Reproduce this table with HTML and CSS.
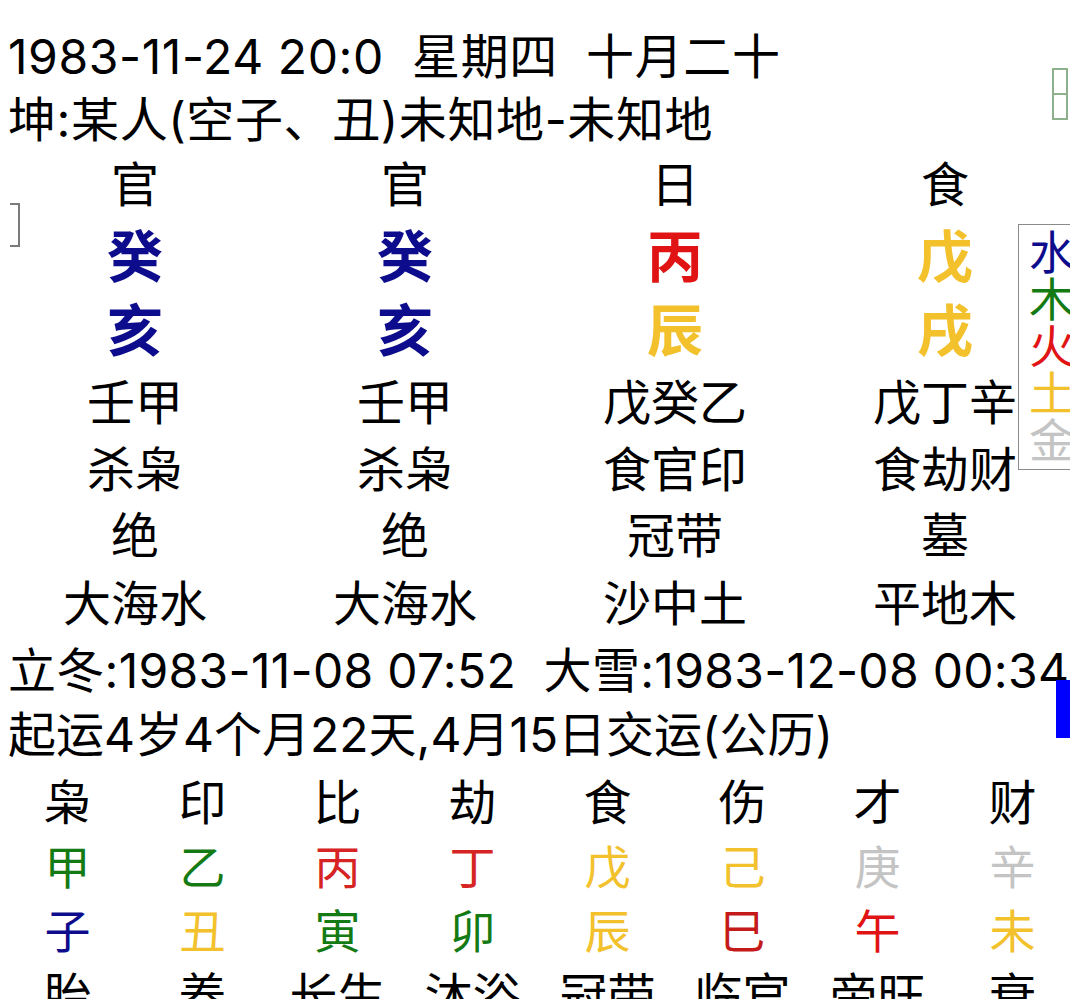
FILE: index.html
```html
<!DOCTYPE html>
<html lang="zh-CN">
<head>
<meta charset="utf-8">
<title>八字排盘</title>
<link rel="stylesheet" href="styles.css">
</head>
<body>
<div class="page">
  <div class="info line1">1983-11-24 20:0  星期四  十月二十</div>
  <div class="info line2">坤:某人(空子、丑)未知地-未知地</div>

  <div class="pillars">
    <div class="prow r-god"><span>官</span><span>官</span><span>日</span><span>食</span></div>
    <div class="prow r-stem"><span class="water">癸</span><span class="water">癸</span><span class="fire">丙</span><span class="earth">戊</span></div>
    <div class="prow r-branch"><span class="water">亥</span><span class="water">亥</span><span class="earth">辰</span><span class="earth">戌</span></div>
    <div class="prow r-hidden"><span>壬甲</span><span>壬甲</span><span>戊癸乙</span><span>戊丁辛</span></div>
    <div class="prow r-hgod"><span>杀枭</span><span>杀枭</span><span>食官印</span><span>食劫财</span></div>
    <div class="prow r-stage"><span>绝</span><span>绝</span><span>冠带</span><span>墓</span></div>
    <div class="prow r-nayin"><span>大海水</span><span>大海水</span><span>沙中土</span><span>平地木</span></div>
  </div>

  <div class="info line3">立冬:1983-11-08 07:52  大雪:1983-12-08 00:34</div>
  <div class="info line4">起运4岁4个月22天,4月15日交运(公历)</div>

  <div class="table8">
    <div class="trow t-god"><span>枭</span><span>印</span><span>比</span><span>劫</span><span>食</span><span>伤</span><span>才</span><span>财</span></div>
    <div class="trow t-stem"><span class="wood">甲</span><span class="wood">乙</span><span class="fire2">丙</span><span class="fire2">丁</span><span class="earth">戊</span><span class="earth">己</span><span class="metal">庚</span><span class="metal">辛</span></div>
    <div class="trow t-branch"><span class="water">子</span><span class="earth">丑</span><span class="wood">寅</span><span class="wood">卯</span><span class="earth">辰</span><span class="fire3">巳</span><span class="fire">午</span><span class="earth">未</span></div>
    <div class="trow t-stage"><span>胎</span><span>养</span><span>长生</span><span>沐浴</span><span>冠带</span><span>临官</span><span>帝旺</span><span>衰</span></div>
  </div>

  <div class="side-panel">
    <span class="water">水</span>
    <span class="wood">木</span>
    <span class="fire">火</span>
    <span class="earth">土</span>
    <span class="metal">金</span>
  </div>
  <div class="tofu"></div>
  <div class="bracket"></div>
  <div class="blue-bar"></div>
</div>
</body>
</html>
```

FILE: styles.css
```css
html, body {
  margin: 0;
  padding: 0;
  background: #ffffff;
}
body {
  font-family: "Noto Sans CJK SC", "Noto Sans", sans-serif;
  color: #000000;
  overflow: hidden;
  height: 999px;
}
.page {
  position: relative;
  width: 1080px;
  height: 999px;
  overflow: hidden;
  padding-top: 25px;
  box-sizing: border-box;
}
.info {
  font-family: "Inter", "Noto Sans CJK SC", sans-serif;
  font-size: 48px;
  white-space: pre;
  padding-left: 8px;
}
.line1 { line-height: 64px; letter-spacing: 0.6px; }
.line2 { line-height: 52px; padding-top: 5px; letter-spacing: 0.6px; }
.line3 { line-height: 58px; padding-top: 8px; letter-spacing: 0.3px; }
.line4 { line-height: 62px; padding-top: 4px; }

.prow {
  display: grid;
  grid-template-columns: repeat(4, 270px);
  font-size: 48px;
  text-align: center;
  white-space: nowrap;
}
.r-god { line-height: 70px; }
.r-stem, .r-branch { line-height: 74px; font-size: 56px; font-weight: 700; }
.r-hidden { line-height: 70px; }
.r-hgod { line-height: 64px; }
.r-stage { line-height: 68px; }
.r-nayin { line-height: 68px; }

.trow {
  display: grid;
  grid-template-columns: repeat(8, 135px);
  font-size: 46px;
  text-align: center;
  white-space: nowrap;
}
.t-god { line-height: 66px; font-size: 48px; }
.t-stem { line-height: 64px; }
.t-branch { line-height: 64px; }
.t-stage { line-height: 64px; font-size: 48px; }

.water { color: #0c0c8c; }
.wood { color: #147a14; }
.fire { color: #e01414; }
.fire2 { color: #d62424; }
.fire3 { color: #c41a1a; }
.earth { color: #f2c12c; }
.metal { color: #c4c4c4; }

.side-panel {
  position: absolute;
  left: 1018px;
  top: 224px;
  width: 52px;
  height: 246px;
  box-sizing: border-box;
  border: 1px solid #8a8a8a;
  border-right: none;
  background: #ffffff;
  overflow: hidden;
  display: flex;
  flex-direction: column;
  padding: 1px 0 0 10px;
  font-size: 46px;
  line-height: 47px;
  white-space: nowrap;
}
.tofu {
  position: absolute;
  left: 1052px;
  top: 68px;
  width: 16px;
  height: 52px;
  box-sizing: border-box;
  border: 2px solid #8db08d;
}
.tofu::after {
  content: "";
  position: absolute;
  left: 0;
  right: 0;
  top: 23px;
  height: 2px;
  background: #8db08d;
}
.bracket {
  position: absolute;
  left: 10px;
  top: 203px;
  width: 10px;
  height: 44px;
  box-sizing: border-box;
  border: 2px solid #7a7a7a;
  border-left: none;
}
.blue-bar {
  position: absolute;
  left: 1056px;
  top: 680px;
  width: 14px;
  height: 58px;
  background: #0000ff;
}
```
